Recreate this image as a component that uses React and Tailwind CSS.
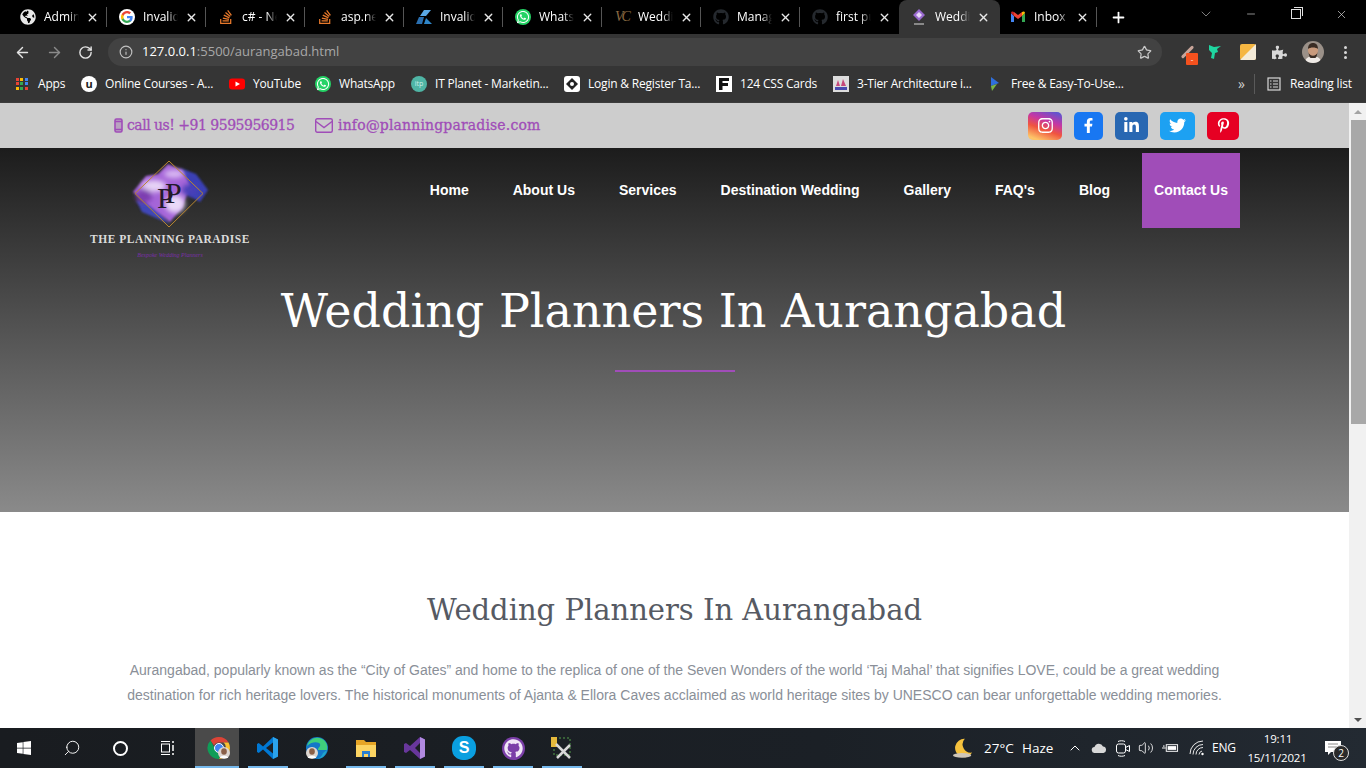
import { FaGithub, FaWhatsapp, FaStackOverflow, FaInstagram, FaFacebookF, FaLinkedinIn, FaTwitter, FaPinterestP, FaWindows, FaPuzzlePiece, FaGlobeAmericas } from 'react-icons/fa'
import { ArrowLeft, ArrowRight, RotateCw, Info, Star, X, Plus, ChevronDown, Minus, Search, ChevronUp, Volume2 } from 'lucide-react'

const GoogleIcon = () => (
  <svg viewBox="0 0 24 24" className="w-4 h-4">
    <circle cx="12" cy="12" r="12" fill="#fff" />
    <path d="M20.5 12.2c0-.6-.1-1.200-.2-1.700H12v3.300h4.800c-.2 1.100-.8 2-1.800 2.600v2.200h2.900c1.700-1.600 2.600-3.800 2.600-6.400z" fill="#4285F4" />
    <path d="M12 21c2.400 0 4.400-.8 5.900-2.200L15 16.600c-.8.500-1.800.9-3 .9-2.300 0-4.300-1.600-5-3.700H4v2.300C5.500 19 8.500 21 12 21z" fill="#34A853" />
    <path d="M7 13.800c-.4-1.100-.4-2.400 0-3.600V7.900H4c-1.300 2.500-1.300 5.600 0 8.200l3-2.300z" fill="#FBBC05" />
    <path d="M12 6.500c1.300 0 2.500.5 3.400 1.300l2.600-2.600C16.400 3.800 14.300 3 12 3 8.500 3 5.500 5 4 7.900l3 2.300c.7-2.100 2.700-3.700 5-3.700z" fill="#EA4335" />
  </svg>
)

const AzureIcon = () => (
  <svg viewBox="0 0 16 16" className="w-4 h-4">
    <path d="M8 1h7l-5 6H4z" fill="#5aa9e6" />
    <path d="M3 8h5l-2 7H0z" fill="#2a6fb0" />
    <path d="M10 9l6 6H8z" fill="#2f86c8" />
  </svg>
)

const WpIcon = () => (
  <span className="text-[14px] leading-4 italic text-[#8a6a42] tracking-[-2px] whitespace-nowrap" style={{ fontFamily: '"Liberation Serif", serif' }}>VC</span>
)

const PlanningFav = () => (
  <svg viewBox="0 0 16 16" className="w-4 h-4">
    <path d="M8 0l6 6-6 6-6-6z" fill="#9a6ad0" />
    <path d="M8 3l3 3-3 3-3-3z" fill="#e8d8fa" />
    <path d="M3 15h10" stroke="#ddd" strokeWidth="1" />
  </svg>
)

const GmailIcon = () => (
  <svg viewBox="0 0 16 16" className="w-4 h-4">
    <path d="M1 4v9h3V7z" fill="#4285F4" />
    <path d="M15 4v9h-3V7z" fill="#34A853" />
    <path d="M4 7V3l4 3 4-3v4L8 10z" fill="#EA4335" />
    <path d="M1 4l3 3V3C2.500 2 1 2.500 1 4z" fill="#C5221F" />
    <path d="M15 4l-3 3V3c1.500-1 3-.5 3 1z" fill="#FBBC05" />
  </svg>
)

const tabs = [
  { title: 'Admin', icon: <FaGlobeAmericas className="w-4 h-4 text-[#e8e8e8]" /> },
  { title: 'Invalid', icon: <GoogleIcon /> },
  { title: 'c# - Net', icon: <FaStackOverflow className="w-4 h-4 text-[#e8792b]" /> },
  { title: 'asp.net', icon: <FaStackOverflow className="w-4 h-4 text-[#e8792b]" /> },
  { title: 'Invalid', icon: <AzureIcon /> },
  { title: 'WhatsApp', icon: <span className="w-4 h-4 rounded-full bg-[#25d366] flex items-center justify-center"><FaWhatsapp className="w-3.5 h-3.5 text-white" /></span> },
  { title: 'Wedding', icon: <WpIcon /> },
  { title: 'Manage', icon: <FaGithub className="w-4 h-4 text-[#25292e]" /> },
  { title: 'first pull', icon: <FaGithub className="w-4 h-4 text-[#25292e]" /> },
  { title: 'Wedding', icon: <PlanningFav />, active: true },
  { title: 'Inbox (', icon: <GmailIcon /> },
]

const AppsIcon = () => (
  <div className="grid grid-cols-3 gap-[1px] w-[13px] h-[13px]">
    {['#ea4335', '#fbbc05', '#4285f4', '#ea4335', '#34a853', '#4285f4', '#fbbc05', '#34a853', '#ea4335'].map((c, i) => (
      <span key={i} className="w-[3px] h-[3px]" style={{ background: c }} />
    ))}
  </div>
)

const bookmarks = [
  { w: 'w-[67px]', label: 'Apps', icon: <AppsIcon /> },
  { w: 'w-[148px]', label: 'Online Courses - A...', icon: <span className="w-4 h-4 rounded-full bg-white text-[#222] text-[11px] leading-4 font-bold text-center">u</span> },
  { w: 'w-[86px]', label: 'YouTube', icon: (
    <svg viewBox="0 0 16 16" className="w-4 h-4"><rect x="0" y="2.500" width="16" height="11" rx="3" fill="#f00" /><path d="M6.500 5.500v5L11 8z" fill="#fff" /></svg>
  ) },
  { w: 'w-[96px]', label: 'WhatsApp', icon: <span className="w-4 h-4 rounded-full bg-[#25d366] flex items-center justify-center"><FaWhatsapp className="w-3.5 h-3.5 text-white" /></span> },
  { w: 'w-[153px]', label: 'IT Planet - Marketin...', icon: <span className="w-4 h-4 rounded-full bg-[#4fb5a5] text-[#cdeee8] text-[7px] leading-4 text-center">itp</span> },
  { w: 'w-[152px]', label: 'Login & Register Ta...', icon: (
    <svg viewBox="0 0 16 16" className="w-4 h-4"><rect width="16" height="16" rx="3" fill="#fff" /><path d="M8 2l6 6-6 6-6-6z" fill="#222" /><circle cx="8" cy="8" r="2" fill="#fff" /></svg>
  ) },
  { w: 'w-[117px]', label: '124 CSS Cards', icon: (
    <svg viewBox="0 0 16 16" className="w-4 h-4"><rect width="16" height="16" fill="#fff" /><path d="M3 2h10v3H6.500v2H12v3H6.500v4H3z" fill="#111" /></svg>
  ) },
  { w: 'w-[154px]', label: '3-Tier Architecture i...', icon: (
    <svg viewBox="0 0 16 16" className="w-4 h-4"><rect width="16" height="16" fill="#ddd" /><path d="M3 10l2-6 2 6zM8 10l2-7 3 7z" fill="#c5487a" /><rect x="2" y="11" width="12" height="3" fill="#4a4ab0" /></svg>
  ) },
  { w: 'w-[251px]', label: 'Free & Easy-To-Use...', icon: (
    <svg viewBox="0 0 16 16" className="w-4 h-4"><path d="M4 1l8 6-8 3z" fill="#2f6fdc" /><path d="M4 10l6-2-5 7z" fill="#7ab648" /></svg>
  ) },
]

const socials = [
  { w: 'w-[34px]', bg: 'bg-[linear-gradient(20deg,#fdc468_10%,#f0553f_40%,#c536a4_65%,#4a5ad8_100%)]', icon: <FaInstagram className="w-[17px] h-[17px]" /> },
  { w: 'w-[29px]', bg: 'bg-[#1877f2]', icon: <FaFacebookF className="w-[15px] h-[15px]" /> },
  { w: 'w-[33px]', bg: 'bg-[#2867b2]', icon: <FaLinkedinIn className="w-[17px] h-[17px]" /> },
  { w: 'w-[35px]', bg: 'bg-[#1da1f2]', icon: <FaTwitter className="w-[17px] h-[17px]" /> },
  { w: 'w-[32px]', bg: 'bg-[#e60023]', icon: <FaPinterestP className="w-[15px] h-[15px]" /> },
]

const navLinks = ['Home', 'About Us', 'Services', 'Destination Wedding', 'Gallery', "FAQ's", 'Blog']

function BrowserTabs() {
  return (
    <div className="h-[34px] bg-black flex items-center pl-2 shrink-0">
      {tabs.map((tab, i) => (
        <div
          key={i}
          className={`relative h-full flex items-center pl-3 shrink-0 ${tab.active ? 'w-[101px] -mr-[2px] bg-[#353535] rounded-t-[8px]' : 'w-[99px]'}`}
        >
          <span className="w-4 h-4 flex items-center justify-center shrink-0">{tab.icon}</span>
          <span className="ml-2 w-[35px] overflow-hidden whitespace-nowrap text-[12px] text-white [mask-image:linear-gradient(to_right,black_70%,transparent)]">{tab.title}</span>
          <X className="ml-[7px] w-[13px] h-[13px] text-[#e8e8e8] shrink-0" strokeWidth={2.5} />
          {!tab.active && i !== 8 && <span className="absolute right-0 top-[7px] h-5 w-px bg-[#555]" />}
        </div>
      ))}
      <Plus className="ml-[13px] w-[17px] h-[17px] text-white shrink-0" strokeWidth={2.5} />
      <div className="flex-1" />
      <div className="flex items-center shrink-0 text-[#e0e0e0]">
        <ChevronDown className="w-4 h-4 mr-[31px] -mt-[6px] text-[#bbb]" strokeWidth={1} />
        <Minus className="w-[12px] h-[12px] mr-[34px] -mt-[6px]" strokeWidth={1.25} />
        <span className="relative w-[10px] h-[10px] mr-[34px] -mt-[6px] border border-[#e0e0e0]">
          <span className="absolute -top-[3px] -right-[3px] w-[9px] h-[9px] border-t border-r border-[#e0e0e0]" />
        </span>
        <X className="w-[13px] h-[13px] mr-[18px] -mt-[6px]" strokeWidth={1.25} />
      </div>
    </div>
  )
}

function Toolbar() {
  return (
    <div className="h-[32px] pt-1 bg-[#353535] flex items-center shrink-0">
      <ArrowLeft className="ml-[14px] w-[17px] h-[17px] text-[#e4e4e4]" strokeWidth={2} />
      <ArrowRight className="ml-[15px] w-[17px] h-[17px] text-[#8a8a8a]" strokeWidth={2} />
      <RotateCw className="ml-[15px] w-[15px] h-[15px] text-[#e4e4e4]" strokeWidth={2.25} />
      <div className="ml-[15px] w-[1054px] h-[28px] rounded-full bg-[#424242] flex items-center">
        <Info className="ml-[11px] w-[14px] h-[14px] text-[#c0c0c0]" strokeWidth={2} />
        <span className="ml-[9px] text-[13px] text-[#a8a8a8]"><span className="text-white">127.0.0.1</span>:5500/aurangabad.html</span>
        <div className="flex-1" />
        <Star className="mr-[10px] w-[15px] h-[15px] text-[#c8c8c8]" strokeWidth={2} />
      </div>
      <span className="relative ml-[17px] w-4 h-4 flex items-center justify-center">
        <span className="w-[3px] h-[16px] rotate-45 bg-[#c9a59a] rounded-sm" />
        <span className="absolute -right-[3px] -bottom-[5px] w-3 h-[12px] bg-[#f4511e] rounded-[1px] text-white text-[8px] leading-[12px] text-center">-</span>
      </span>
      <svg viewBox="0 0 16 16" className="ml-[12px] w-4 h-4">
        <path d="M2 1l5 2 7-1-4 3 1 3-3 1-1 6-3-1 1-5-3-3z" fill="#1fd6a0" />
      </svg>
      <svg viewBox="0 0 16 16" className="ml-[17px] w-4 h-4">
        <rect width="16" height="16" rx="2" fill="#f5b642" />
        <path d="M16 0v14a2 2 0 0 1-2 2H0z" fill="#f4ebd8" />
      </svg>
      <FaPuzzlePiece className="ml-[16px] w-[15px] h-[15px] text-[#d8d8d8]" />
      <svg viewBox="0 0 22 22" className="ml-[15px] w-[22px] h-[22px] shrink-0">
        <defs><clipPath id="face"><circle cx="11" cy="11" r="11" /></clipPath></defs>
        <g clipPath="url(#face)">
          <rect width="22" height="22" fill="#9a9088" />
          <path d="M3 22c0-5 4-7 8-7s8 2 8 7z" fill="#efeae6" />
          <ellipse cx="11" cy="9.500" rx="5" ry="6" fill="#c99a7c" />
          <path d="M6 8c0-4 2-6 5-6s5 2 5 6c-2-2-8-2-10 0z" fill="#3a2c24" />
          <path d="M6.500 11c1 5 8 5 9 0-1 6-1 6-4.500 6s-3.500 0-4.500-6z" fill="#3a2c24" />
        </g>
      </svg>
      <span className="ml-[20px] flex flex-col gap-[2px]">
        <span className="w-[3px] h-[3px] rounded-full bg-[#d8d8d8]" />
        <span className="w-[3px] h-[3px] rounded-full bg-[#d8d8d8]" />
        <span className="w-[3px] h-[3px] rounded-full bg-[#d8d8d8]" />
      </span>
    </div>
  )
}

function BookmarksBar() {
  return (
    <div className="h-[37px] bg-[#353535] flex items-center pl-[14px] shrink-0 border-b border-[#3c3c3c]">
      {bookmarks.map((b, i) => (
        <div key={i} className={`${b.w} flex items-center gap-2 shrink-0`}>
          <span className="w-4 h-4 flex items-center justify-center shrink-0">{b.icon}</span>
          <span className="text-[12px] tracking-[-0.2px] text-white whitespace-nowrap">{b.label}</span>
        </div>
      ))}
      <span className="text-[14px] leading-4 text-[#d0d0d0] w-[16px]">»</span>
      <span className="h-5 w-px bg-[#5a5a5a] shrink-0" />
      <svg viewBox="0 0 14 14" className="ml-[12px] w-[14px] h-[14px]" fill="none" stroke="#d8d8d8" strokeWidth="1.2">
        <rect x="1" y="1" width="12" height="12" />
        <path d="M3 4h1.500M3 7h1.500M3 10h1.500M6 4h5M6 7h5M6 10h5" />
      </svg>
      <span className="ml-[9px] text-[12px] tracking-[-0.2px] text-white whitespace-nowrap">Reading list</span>
    </div>
  )
}

function Logo() {
  return (
    <div className="w-[160px] flex flex-col items-center">
      <svg viewBox="0 0 80 72" className="w-[80px] h-[72px]">
        <defs>
          <filter id="soft"><feGaussianBlur stdDeviation="1.2" /></filter>
          <filter id="softer"><feGaussianBlur stdDeviation="2.8" /></filter>
        </defs>
        <g filter="url(#soft)">
          <path d="M50 8L66 14L78 30L70 42L56 34z" fill="#3b3fb5" />
          <path d="M6 40L20 44L40 64L26 58L12 52z" fill="#3f47b8" />
          <path d="M3 32L16 16L28 14L38 4L52 10L60 26L52 48L40 62L20 46z" fill="#a565d8" />
        </g>
        <g filter="url(#softer)">
          <ellipse cx="24" cy="26" rx="12" ry="6" fill="#e6d2f6" />
          <ellipse cx="45" cy="44" rx="10" ry="9" fill="#ead9f8" />
          <ellipse cx="44" cy="14" rx="10" ry="4" fill="#d8b8f2" />
          <ellipse cx="14" cy="36" rx="8" ry="7" fill="#7d3cb0" />
          <ellipse cx="60" cy="30" rx="8" ry="6" fill="#4a3fb8" />
        </g>
        <path d="M39 1L73 33.500L39 67L5 33.500z" fill="none" stroke="#b8862f" strokeWidth="1" />
        <text x="27" y="48" fontSize="30" fontFamily="Liberation Serif, serif" fill="#221a2a">P</text>
        <text x="35" y="43" fontSize="30" fontFamily="Liberation Serif, serif" fill="#221a2a">P</text>
      </svg>
      <span className="text-[11.5px] leading-[14px] font-bold tracking-[0.5px] text-[#dcdcdc] whitespace-nowrap [font-family:'Liberation_Serif',serif]">THE PLANNING PARADISE</span>
      <span className="mt-[5px] text-[6px] leading-[8px] italic text-[#7b2fa8] whitespace-nowrap [font-family:'Liberation_Serif',serif]">Bespoke Wedding Planners</span>
    </div>
  )
}

function SitePage() {
  return (
    <div className="flex-1 min-w-0 overflow-hidden bg-white">
      <div className="h-[45px] bg-[#cdcdcd] flex items-center justify-between pl-[114px] pr-[110px]">
        <div className="flex items-center text-[#a04db8] text-[14px] [font-family:'DejaVu_Serif',serif]">
          <svg viewBox="0 0 9 15" className="w-[9px] h-[15px]" fill="none" stroke="currentColor" strokeWidth="1.6">
            <rect x="1" y="1" width="7" height="13" rx="1.500" fill="#b9a3c0" />
            <path d="M1 3.500h7M1 11.500h7" />
          </svg>
          <span className="ml-[4px] w-[168px] whitespace-nowrap tracking-[-0.5px] [-webkit-text-stroke:0.3px_#a04db8]">call us! +91 9595956915</span>
          <svg viewBox="0 0 18 15" className="ml-[20px] w-[18px] h-[15px]" fill="none" stroke="currentColor" strokeWidth="1.4">
            <rect x="0.700" y="0.700" width="16.600" height="13.600" rx="1.500" />
            <path d="M1 3.500L9 9.500L17 3.500" />
          </svg>
          <span className="ml-[5px] whitespace-nowrap tracking-[0.15px] [-webkit-text-stroke:0.3px_#a04db8]">info@planningparadise.com</span>
        </div>
        <div className="flex items-center gap-3">
          {socials.map((s, i) => (
            <span key={i} className={`${s.w} ${s.bg} h-[28px] rounded-[5px] flex items-center justify-center text-white`}>{s.icon}</span>
          ))}
        </div>
      </div>

      <div className="h-[364px] bg-[linear-gradient(180deg,#1c1c1c_0%,#8a8a8a_100%)]">
        <div className="h-[118px] flex justify-between pl-[90px] pr-[109px] pt-[5px]">
          <div className="pt-[7px]"><Logo /></div>
          <nav className="flex items-start [font-family:'Liberation_Sans',sans-serif] text-[14px] font-bold text-white">
            {navLinks.map((l) => (
              <a key={l} className="px-[22px] h-[75px] flex items-center">{l}</a>
            ))}
            <a className="ml-[10px] w-[98px] h-[75px] bg-[#a04db8] flex items-center justify-center">Contact Us</a>
          </nav>
        </div>
        <h1 className="mt-[15px] pr-[2px] text-center text-white text-[46px] leading-[60px] font-normal [font-family:'DejaVu_Serif',serif]">Wedding Planners In Aurangabad</h1>
        <div className="mt-[29px] ml-[615px] w-[120px] h-[2px] bg-[#a04db8]" />
      </div>

      <div className="pt-[78px] text-center">
        <h2 className="text-[29px] leading-[40px] font-normal text-[#565a63] [font-family:'DejaVu_Serif',serif]">Wedding Planners In Aurangabad</h2>
        <p className="mt-[28px] px-[120px] text-[14px] leading-[25px] text-[#8a8f98] [font-family:'Liberation_Sans',sans-serif]">
          Aurangabad, popularly known as the “City of Gates” and home to the replica of one of the Seven Wonders of the world ‘Taj Mahal’ that signifies LOVE, could be a great wedding destination for rich heritage lovers. The historical monuments of Ajanta &amp; Ellora Caves acclaimed as world heritage sites by UNESCO can bear unforgettable wedding memories.
        </p>
      </div>
    </div>
  )
}

function Scrollbar() {
  return (
    <div className="w-[17px] bg-[#f1f1f1] flex flex-col items-center shrink-0">
      <span className="mt-[7px] w-0 h-0 border-l-[4px] border-r-[4px] border-b-[4px] border-l-transparent border-r-transparent border-b-[#a3a3a3]" />
      <span className="mt-[6px] ml-[1px] w-[15px] h-[304px] bg-[#a8a8a8]" />
      <span className="flex-1" />
      <span className="mb-[6px] w-0 h-0 border-l-[4px] border-r-[4px] border-t-[4px] border-l-transparent border-r-transparent border-t-[#505050]" />
    </div>
  )
}

const AvatarDot = ({ cx, cy }) => (
  <g>
    <circle cx={cx} cy={cy} r="6" fill="#ddd6d0" />
    <ellipse cx={cx} cy={cy - 1.500} rx="2.800" ry="3.200" fill="#8a6048" />
    <path d={`M${cx - 4} ${cy + 5}c0-3 8-3 8 0z`} fill="#fff" />
  </g>
)

const taskApps = [
  { key: 'chrome', w: 'w-[44px]', line: true, active: true, icon: (
    <svg viewBox="0 0 24 24" className="w-6 h-6 ml-1">
      <path d="M12 1a11 11 0 0 1 9.500 5.500H12a5.500 5.500 0 0 0-5 3L3.500 4.500A11 11 0 0 1 12 1z" fill="#db4437" />
      <path d="M21.500 6.500A11 11 0 0 1 12 23l5-8a5.500 5.500 0 0 0-.5-8.500z" fill="#fbc02d" />
      <path d="M12 23A11 11 0 0 1 3.500 4.500L7.500 12a5.500 5.500 0 0 0 6 5z" fill="#0f9d58" />
      <circle cx="12" cy="12" r="4.500" fill="#4285f4" stroke="#fff" />
      <AvatarDot cx={17} cy={17} />
    </svg>
  ) },
  { key: 'code', w: 'w-[40px]', line: true, icon: (
    <svg viewBox="0 0 24 24" className="w-6 h-6">
      <path d="M17 1l5 2.500v17L17 23 7 13.500 2.800 17 1 16V8l1.800-1L7 10.500z" fill="#0078d4" />
      <path d="M17 6.500L10 12l7 5.500z" fill="#1b1f24" />
      <path d="M17 1l5 2.500v17L17 23z" fill="#2ba3ec" />
    </svg>
  ) },
  { key: 'edge', w: 'w-[40px]', icon: (
    <svg viewBox="0 0 24 24" className="w-6 h-6">
      <circle cx="12" cy="12" r="11" fill="#1478c8" />
      <path d="M2 10C4 3 11 0 17 3c4 2 6 6 5 11h-9c0-3 3-3 2-6-1-2-8-3-13 2z" fill="#3fcf7c" />
      <path d="M22 14c-1 5-5 9-10 9 3-1 5-3 6-6z" fill="#1fa5c9" />
      <AvatarDot cx={7} cy={17} />
    </svg>
  ) },
  { key: 'files', w: 'w-[40px]', line: true, icon: (
    <svg viewBox="0 0 24 24" className="w-6 h-6">
      <path d="M2 4h8l2 2h10v4H2z" fill="#e6a526" />
      <path d="M2 9h20v12H2z" fill="#fcd462" />
      <path d="M8 21v-6h8v6h-2v-3h-4v3z" fill="#2a7fd0" />
    </svg>
  ) },
  { key: 'vs', w: 'w-[40px]', line: true, icon: (
    <svg viewBox="0 0 24 24" className="w-6 h-6">
      <path d="M17 1l5 2.500v17L17 23 7 14l-4 3-2-1V8l2-1 4 3z" fill="#68379c" />
      <path d="M17 7l-5 5 5 5z" fill="#1b1f24" />
      <path d="M17 1l5 2.500v17L17 23z" fill="#b18ae0" />
    </svg>
  ) },
  { key: 'skype', w: 'w-[40px]', line: true, icon: (
    <span className="w-6 h-6 rounded-[45%] bg-[#0a9fe0] text-white text-[16px] leading-6 font-bold text-center [font-family:'Liberation_Sans',sans-serif]">S</span>
  ) },
  { key: 'github', w: 'w-[40px]', line: true, icon: (
    <span className="w-[23px] h-[23px] rounded-full bg-[#7b3fa8] flex items-center justify-center"><FaGithub className="w-[19px] h-[19px] text-[#f0e6f6]" /></span>
  ) },
  { key: 'tool', w: 'w-[40px]', line: true, icon: (
    <svg viewBox="0 0 24 24" className="w-6 h-6">
      <rect x="1" y="1" width="6" height="10" fill="#e5b93c" />
      <path d="M9 2h11v17H4v-6" fill="none" stroke="#55a04a" strokeDasharray="2 2" />
      <path d="M6 8l14 14M20 9L7 22" stroke="#d8d8d8" strokeWidth="2.500" />
    </svg>
  ) },
]

function Taskbar() {
  return (
    <div className="h-10 bg-[linear-gradient(90deg,#191c20_0%,#1b2026_60%,#232a32_100%)] flex items-center text-white shrink-0">
      <div className="w-12 flex justify-center"><FaWindows className="w-4 h-4" /></div>
      <div className="w-12 flex justify-center"><Search className="w-[18px] h-[18px] -scale-x-100" strokeWidth={1.25} /></div>
      <div className="w-12 flex justify-center"><span className="w-[15px] h-[15px] rounded-full border-2 border-white" /></div>
      <div className="w-12 flex justify-center">
        <svg viewBox="0 0 16 16" className="w-4 h-4" fill="none" stroke="#fff" strokeWidth="1">
          <path d="M1 1.500h9M1 14.500h9" />
          <rect x="1.500" y="4" width="8" height="8" />
          <path d="M13 1v2M13 5v6M13 13v2" strokeWidth="1.500" />
        </svg>
      </div>
      <div className="ml-[3px] flex h-full">
        {taskApps.map((a, i) => (
          <div
            key={a.key}
            className={`relative ${a.w} h-full flex items-center justify-center ${i > 0 ? 'ml-[9px]' : ''} ${a.active ? 'bg-[#4a4a4a]' : ''}`}
          >
            {a.icon}
            {a.line && <span className="absolute left-0 right-0 bottom-0 h-[2px] bg-[#76b9ed]" />}
          </div>
        ))}
      </div>
      <div className="flex-1" />
      <div className="flex items-center text-[13.5px]">
        <svg viewBox="0 0 24 24" className="w-[22px] h-[22px]">
          <path d="M14 2a10 10 0 1 0 8 15A9 9 0 0 1 14 2z" fill="#f5c13d" />
          <ellipse cx="11" cy="20" rx="10" ry="2.500" fill="#cfc6b8" />
        </svg>
        <span className="ml-[10px] w-[38px] whitespace-nowrap">27°C</span>
        <span className="w-[45px] whitespace-nowrap">Haze</span>
        <ChevronUp className="w-4 h-4 mr-[8px]" strokeWidth={1.5} />
        <svg viewBox="0 0 16 10" className="w-4 h-[10px] mr-[8px]"><path d="M4 10a3 3 0 0 1-.5-6A4.500 4.500 0 0 1 12 3.500 3.300 3.300 0 0 1 12.500 10z" fill="#d8d8d8" /></svg>
        <svg viewBox="0 0 16 20" className="w-4 h-5 mr-[7px]" fill="none" stroke="#fff" strokeWidth="1">
          <rect x="1.500" y="6" width="9" height="9" rx="2" />
          <path d="M10.500 9.500l4-2v6l-4-2M3 3.500c2-1 5-1 7 0M3 17.500c2 1 5 1 7 0" />
        </svg>
        <Volume2 className="w-4 h-4 mr-[8px]" strokeWidth={1.25} />
        <svg viewBox="0 0 18 12" className="w-[17px] h-[12px] mr-[10px]" fill="none" stroke="#fff">
          <rect x="4.500" y="2.500" width="12" height="7" />
          <rect x="6" y="4" width="9" height="4" fill="#fff" stroke="none" />
          <path d="M0 6h4M2 3v2" />
        </svg>
        <svg viewBox="0 0 16 16" className="w-4 h-4 mr-[7px]" fill="none" stroke="#e8e8e8" strokeWidth="1">
          <path d="M1 14a13 13 0 0 1 13-13M4 14.500a10 10 0 0 1 10-10M7 14.500a7 7 0 0 1 7-7M10 14.500a4 4 0 0 1 3-3.500" />
          <circle cx="13.500" cy="14" r="1.200" fill="#fff" stroke="none" />
        </svg>
        <span className="text-[12px] tracking-[-0.2px] w-[32px] whitespace-nowrap">ENG</span>
        <div className="w-[66px] flex flex-col items-center text-[11.5px] tracking-[-0.2px] leading-[19px]">
          <span className="ml-[2px]">19:11</span>
          <span className="whitespace-nowrap">15/11/2021</span>
        </div>
        <div className="relative ml-[15px] mr-[25px] w-4 h-4">
          <svg viewBox="0 0 16 16" className="w-4 h-4"><path d="M0 1h16v11H6l-3 3v-3H0z" fill="#fff" /><path d="M3 4h10M3 7h10" stroke="#888" /></svg>
          <span className="absolute -right-[8px] -bottom-[5px] w-[16px] h-[16px] rounded-full border border-[#ddd] bg-[#2a2a2a] text-[10px] leading-[14px] text-center">2</span>
        </div>
      </div>
    </div>
  )
}

export default function App() {
  return (
    <div className="w-[1366px] h-[768px] flex flex-col overflow-hidden bg-white [font-family:'Open_Sans',sans-serif]">
      <BrowserTabs />
      <Toolbar />
      <BookmarksBar />
      <div className="flex-1 min-h-0 flex">
        <SitePage />
        <Scrollbar />
      </div>
      <Taskbar />
    </div>
  )
}
